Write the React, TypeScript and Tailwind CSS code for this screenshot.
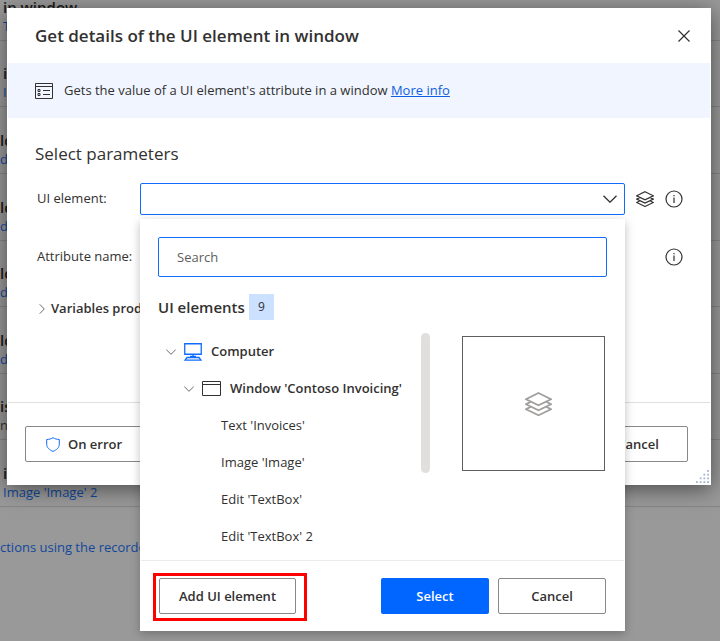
import type { ReactNode } from "react";

const steps = [
  { title: "in window", detail: "Text", link: true, inset: true },
  { title: "in", detail: "Image", link: true, inset: true },
  { title: "ld", detail: "dit", link: true, inset: false },
  { title: "ld", detail: "dit", link: true, inset: false },
  { title: "ld", detail: "dit", link: true, inset: false },
  { title: "ld", detail: "dit", link: true, inset: false },
  { title: "is", detail: "ng", link: false, inset: false },
  { title: "in", detail: "Image 'Image' 2", link: true, inset: true },
];

const elements = ["Text 'Invoices'", "Image 'Image'", "Edit 'TextBox'", "Edit 'TextBox' 2"];

const gripDots = [
  [12, 0],
  [8, 4],
  [12, 4],
  [4, 8],
  [8, 8],
  [12, 8],
  [0, 12],
  [4, 12],
  [8, 12],
  [12, 12],
];

function Chevron({ className }: { className: string }) {
  return (
    <svg viewBox="0 0 14 8" className={className} fill="none" stroke="currentColor" aria-hidden>
      <path d="M.5 .8 7 7.2 13.5 .8" strokeWidth="1.3" />
    </svg>
  );
}

function Layers({ className }: { className: string }) {
  return (
    <svg viewBox="0 0 27 24" className={className} fill="none" stroke="currentColor" aria-hidden>
      <path
        d="M13.5 1 26 7.2 13.5 13.2 1 7.2ZM6 9.6 1 12.2l12.5 6L26 12.2l-5-2.6M6 14.6 1 17.2l12.5 6L26 17.2l-5-2.6"
        strokeWidth="1.8"
      />
    </svg>
  );
}

function InfoButton({ label }: { label: string }) {
  return (
    <button type="button" aria-label={label} className="shrink-0">
      <svg viewBox="0 0 18 18" className="size-[18px]" fill="none" stroke="currentColor" aria-hidden>
        <circle cx="9" cy="9" r="8" strokeWidth="1.2" />
        <path d="M9 7.5V13M9 5v1.3" strokeWidth="1.2" />
      </svg>
    </button>
  );
}

function OutlineButton({ className, children }: { className: string; children: ReactNode }) {
  return (
    <button
      type="button"
      className={`flex h-9 items-center rounded-xs border border-[#8a8886] bg-white pt-px text-[13px] font-semibold ${className}`}
    >
      {children}
    </button>
  );
}

function StepList() {
  return (
    <div className="w-full overflow-hidden">
      <ol className="-mt-[26px] grid h-[533px] auto-rows-fr">
        {steps.map((step, i) => (
          <li
            key={i}
            className={`flex flex-col justify-end border-b border-[#858585] pb-[5px] whitespace-nowrap ${
              step.inset ? "pl-[3px]" : ""
            }`}
          >
            <span className="text-[15px] leading-5 font-semibold text-[#1c1b1a]">{step.title}</span>
            <span className={`text-[13px] leading-[18px] ${step.link ? "text-[#12489c]" : "text-[#333]"}`}>
              {step.detail}
            </span>
          </li>
        ))}
      </ol>
      <a href="#recorder" className="mt-[30px] block text-[13px] leading-5 text-[#12489c]">
        ctions using the recorder
      </a>
    </div>
  );
}

function ElementPicker() {
  return (
    <div className="absolute inset-x-0 top-full mt-1 bg-white pt-[18px] shadow-[0_3px_9px_rgba(0,0,0,0.25)]">
      <div className="px-[18px]">
        <input
          type="text"
          aria-label="Search"
          placeholder="Search"
          className="block h-10 w-full rounded-xs border border-[#0f6cff] px-[18px] text-[13px] outline-none placeholder:text-[#605e5c]"
        />
        <h3 className="mt-[17px] flex items-center gap-1 text-[15px] font-semibold">
          UI elements
          <span className="flex h-[26px] w-[25px] items-center justify-center bg-[#cce0ff] text-xs font-normal">9</span>
        </h3>
      </div>

      <div className="mt-[13px] flex">
        <ul className="flex-1 pl-[26px] text-[13px] leading-[37px]">
          <li>
            <div className="flex items-center font-semibold">
              <Chevron className="h-[6px] w-[10px] text-[#605e5c]" />
              <svg viewBox="0 0 18 18" className="mr-[9px] ml-2 size-[18px]" fill="none" stroke="#0f6cff" aria-hidden>
                <path d="M.75 .75h16.5v10.5H.75ZM9 11.5v2M6 13.5h6M3 14.5h12l2 2.7H1Z" strokeWidth="1.3" />
              </svg>
              Computer
            </div>
            <ul className="pl-[18px]">
              <li>
                <div className="flex items-center font-semibold whitespace-nowrap">
                  <Chevron className="h-[6px] w-[10px] text-[#605e5c]" />
                  <svg viewBox="0 0 19 15" className="mr-[9px] ml-2 h-[15px] w-[19px]" fill="none" stroke="currentColor" aria-hidden>
                    <path d="M.5 .5h18v14H.5ZM.5 3.5h18" />
                  </svg>
                  Window 'Contoso Invoicing'
                </div>
                <ul className="pl-[37px]">
                  {elements.map((name) => (
                    <li key={name}>{name}</li>
                  ))}
                </ul>
              </li>
            </ul>
          </li>
        </ul>
        <div className="h-[140px] w-[9px] rounded-full bg-[#e1dfdd]" />
        <div className="mt-[3px] mr-5 ml-8 flex h-[135px] w-[143px] items-center justify-center border border-[#605e5c] pl-[10px]">
          <Layers className="h-6 w-[27px] text-[#a19f9d]" />
        </div>
      </div>

      <div className="mx-px mt-[5px] flex items-start justify-between border-t border-[#edebe9] pt-3 pr-[18px] pb-[10px] pl-3">
        <div className="border-[3px] border-[#f00] pt-[2px] pr-2 pb-1 pl-[3px]">
          <OutlineButton className="w-[137px] justify-center">Add UI element</OutlineButton>
        </div>
        <div className="mt-[5px] flex gap-[9px]">
          <button type="button" className="h-9 w-[108px] rounded-xs bg-[#0066ff] pt-px text-[13px] font-semibold text-white">
            Select
          </button>
          <OutlineButton className="w-[108px] justify-center">Cancel</OutlineButton>
        </div>
      </div>
    </div>
  );
}

export default function App() {
  return (
    <div className="relative min-h-screen overflow-hidden bg-[#999] font-['Open_Sans','Segoe_UI',sans-serif] text-[#323130]">
      <StepList />

      <section
        role="dialog"
        aria-labelledby="dialog-title"
        className="absolute top-2 right-[9px] left-[7px] bg-white shadow-[0_4px_20px_rgba(0,0,0,0.5)]"
      >
        <header className="flex h-[55px] items-center justify-between pr-[21px] pl-7">
          <h1 id="dialog-title" className="text-[17px] font-semibold">
            Get details of the UI element in window
          </h1>
          <button type="button" aria-label="Close">
            <svg viewBox="0 0 12 12" className="size-3" fill="none" stroke="currentColor" aria-hidden>
              <path d="m.5 .5 11 11M11.5 .5l-11 11" strokeWidth="1.2" />
            </svg>
          </button>
        </header>

        <div className="mx-px flex h-[55px] items-center gap-[11px] bg-[#f0f5ff] px-[27px] text-[13px]">
          <svg viewBox="0 0 18 16" className="h-4 w-[18px]" fill="none" stroke="currentColor" aria-hidden>
            <path d="M.5 .5h17v15H.5ZM.5 3.5h17M8 7.5h7M8 11.5h7M3 6.5h2v2H3ZM3 10.5h2v2H3Z" />
          </svg>
          <p>
            Gets the value of a UI element's attribute in a window{" "}
            <a href="#more-info" className="text-[#0f5fe0] underline">
              More info
            </a>
          </p>
        </div>

        <h2 className="mt-6 px-7 text-[17px] leading-6">Select parameters</h2>

        <div className="mt-[17px] pr-7 pl-[30px] text-[13px]">
          <div className="flex items-center">
            <label htmlFor="ui-element" className="w-[103px] shrink-0">
              UI element:
            </label>
            <div className="relative flex-1">
              <select
                id="ui-element"
                className="block h-8 w-full appearance-none rounded-xs border border-[#0f6cff] bg-white outline-none"
              />
              <Chevron className="pointer-events-none absolute top-3 right-2 h-2 w-[14px]" />
              <ElementPicker />
            </div>
            <button type="button" aria-label="UI elements" className="mx-[11px] shrink-0">
              <Layers className="h-4 w-[18px]" />
            </button>
            <InfoButton label="About UI element" />
          </div>
          <div className="mt-7 flex h-7 items-center justify-between">
            <span>Attribute name:</span>
            <InfoButton label="About attribute name" />
          </div>
          <button type="button" className="mt-[26px] flex h-6 items-center gap-1 font-semibold">
            <Chevron className="h-[6px] w-[10px] -rotate-90 text-[#605e5c]" />
            Variables produced
          </button>
        </div>

        <footer className="mx-px mt-[81px] flex justify-between border-t border-[#e1dfdd] pt-[23px] pr-[22px] pb-[23px] pl-[17px]">
          <OutlineButton className="w-[137px] gap-2 pl-5">
            <svg viewBox="0 0 14 15" className="h-[15px] w-[14px]" fill="none" stroke="#0f6cff" aria-hidden>
              <path d="M7 .7c1.8 1.2 3.9 1.7 6.3 1.8v4.7c0 3.3-2.5 5.7-6.3 7.2C3.2 12.9.7 10.5.7 7.2V2.5C3.1 2.4 5.2 1.9 7 .7Z" />
            </svg>
            On error
          </OutlineButton>
          <OutlineButton className="w-[100px] justify-center">Cancel</OutlineButton>
        </footer>

        <svg viewBox="0 0 14 14" className="absolute right-[2px] bottom-[2px] size-[13px]" fill="#a9b8d6" aria-hidden>
          {gripDots.map(([x, y]) => (
            <rect key={`${x}-${y}`} x={x} y={y} width="2" height="2" />
          ))}
        </svg>
      </section>
    </div>
  );
}
